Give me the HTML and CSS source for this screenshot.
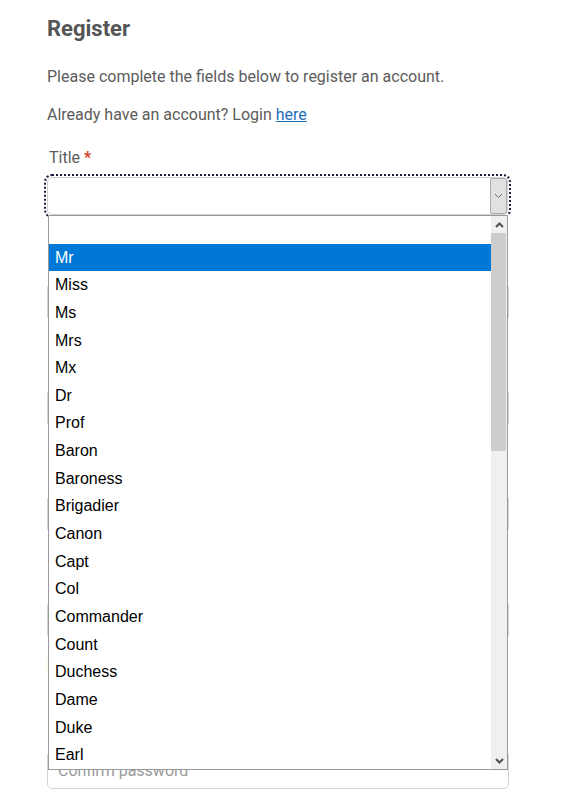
FILE: index.html
```html
<!DOCTYPE html>
<html lang="en">
<head>
  <meta charset="UTF-8" />
  <meta name="viewport" content="width=device-width, initial-scale=1.0" />
  <title>Register</title>
  <link rel="stylesheet" href="styles.css">
</head>
<body>
  <div class="container">
    <h1>Register</h1>
    <p class="intro">Please complete the fields below to register an account.</p>
    <p class="login">Already have an account? Login <a href="#">here</a></p>

    <div class="field title-field">
      <label>Title <span class="req">*</span></label>
      <div class="select focused">
        <span class="select-value"></span>
        <span class="select-btn">
          <svg width="9" height="6" viewBox="0 0 9 6"><polyline points="1,1 4.5,4.5 8,1" fill="none" stroke="#6a6a6a" stroke-width="1"/></svg>
        </span>
      </div>

      <div class="dropdown">
        <ul class="options">
          <li></li>
          <li class="selected">Mr</li>
          <li>Miss</li>
          <li>Ms</li>
          <li>Mrs</li>
          <li>Mx</li>
          <li>Dr</li>
          <li>Prof</li>
          <li>Baron</li>
          <li>Baroness</li>
          <li>Brigadier</li>
          <li>Canon</li>
          <li>Capt</li>
          <li>Col</li>
          <li>Commander</li>
          <li>Count</li>
          <li>Duchess</li>
          <li>Dame</li>
          <li>Duke</li>
          <li>Earl</li>
        </ul>
        <div class="scrollbar">
          <span class="scroll-arrow">
            <svg width="9" height="6" viewBox="0 0 9 6"><polyline points="1,5 4.5,1.5 8,5" fill="none" stroke="#505050" stroke-width="2"/></svg>
          </span>
          <span class="scroll-thumb"></span>
          <span class="scroll-track"></span>
          <span class="scroll-arrow">
            <svg width="9" height="6" viewBox="0 0 9 6"><polyline points="1,1 4.5,4.5 8,1" fill="none" stroke="#505050" stroke-width="2"/></svg>
          </span>
        </div>
      </div>
    </div>

    <div class="field">
      <label>First name <span class="req">*</span></label>
      <input type="text" placeholder="First name">
    </div>

    <div class="field">
      <label>Last name <span class="req">*</span></label>
      <input type="text" placeholder="Last name">
    </div>

    <div class="field">
      <label>Email address <span class="req">*</span></label>
      <input type="text" placeholder="Email address">
    </div>

    <div class="field">
      <label>Password <span class="req">*</span></label>
      <input type="password" placeholder="Password">
      <div class="hint">Must be at least 8 characters long.</div>
    </div>

    <div class="field">
      <label>Confirm password <span class="req">*</span></label>
      <input type="password" placeholder="Confirm password">
    </div>
  </div>
</body>
</html>
```

FILE: styles.css
```css
body {
  margin: 0;
  padding: 0;
  font-family: Roboto, "Liberation Sans", Arial, sans-serif;
  color: #5c5c5c;
  background-color: #ffffff;
}

.container {
  width: 462px;
  margin-left: 47px;
  padding-top: 15px;
}

h1 {
  margin: 0;
  font-size: 22px;
  line-height: 28px;
  font-weight: 700;
  color: #555555;
}

p {
  margin: 0;
  font-size: 16px;
  line-height: 24px;
}

.intro {
  margin-top: 22px;
}

.login {
  margin-top: 14px;
}

.login a {
  color: #1d6fb8;
  text-decoration: underline;
}

.field {
  margin-top: 36px;
}

.title-field {
  position: relative;
  margin-top: 19px;
}

label {
  display: block;
  padding-left: 2px;
  font-size: 16px;
  line-height: 24px;
  color: #5c5c5c;
}

.req {
  color: #d2401e;
  font-weight: 700;
}

.select {
  display: flex;
  justify-content: flex-end;
  box-sizing: border-box;
  width: 461px;
  height: 38px;
  margin-top: 7px;
  border: 1px solid #cfcfcf;
  border-radius: 5px;
  background-color: #ffffff;
}

.select.focused {
  outline: 2px dotted #1c1c3c;
  outline-offset: 1px;
}

.select-value {
  flex: 1;
}

.select-btn {
  display: flex;
  align-items: center;
  justify-content: center;
  box-sizing: border-box;
  width: 17px;
  height: 36px;
  border: 1px solid #adadad;
  border-radius: 2px;
  background-color: #e1e1e1;
}

input {
  display: block;
  box-sizing: border-box;
  width: 462px;
  height: 38px;
  margin-top: 8px;
  padding: 0 10px;
  border: 1px solid #d4d4d4;
  border-radius: 5px;
  font-family: Roboto, "Liberation Sans", Arial, sans-serif;
  font-size: 16px;
  color: #555555;
}

input::placeholder {
  color: #9a9a9a;
}

.hint {
  margin-top: 8px;
  font-size: 14px;
  line-height: 36px;
  color: #888888;
}

/* open select popup */
.dropdown {
  position: absolute;
  top: 69px;
  left: 1px;
  z-index: 10;
  display: flex;
  box-sizing: border-box;
  width: 460px;
  height: 555px;
  border: 1px solid #9a9a9a;
  background-color: #ffffff;
}

.options {
  flex: 1;
  margin: 0;
  padding: 0;
  list-style: none;
  font-family: "Liberation Sans", Arial, sans-serif;
  font-size: 16px;
  color: #000000;
}

.options li {
  height: 27.65px;
  line-height: 27.65px;
  padding-left: 6px;
}

.options li.selected {
  background-color: #0078d7;
  color: #ffffff;
}

.scrollbar {
  display: flex;
  flex-direction: column;
  width: 16px;
  background-color: #f0f0f0;
}

.scroll-arrow {
  display: flex;
  align-items: center;
  justify-content: center;
  height: 17px;
}

.scroll-thumb {
  height: 218px;
  margin-right: 1px;
  background-color: #cdcdcd;
}

.scroll-track {
  flex: 1;
}
```
